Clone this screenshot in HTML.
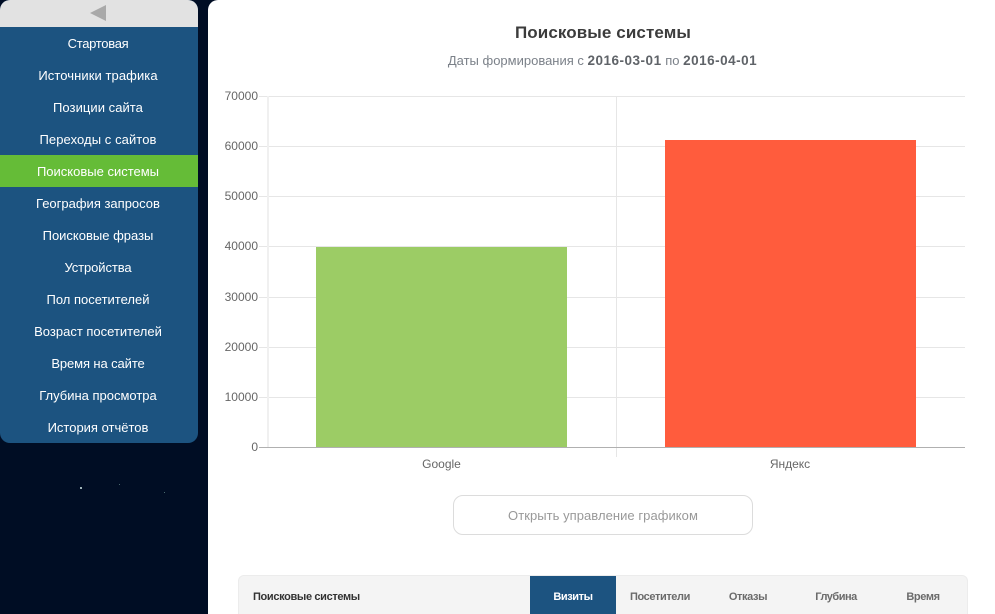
<!DOCTYPE html>
<html lang="ru"><head><meta charset="utf-8"><title>Поисковые системы</title>
<style>
*{box-sizing:border-box}
html,body{margin:0;padding:0;width:995px;height:614px;overflow:hidden;background:#000d24;font-family:"Liberation Sans",sans-serif}
.star{position:absolute;background:#9fb4b8}
#side{position:absolute;left:0;top:0;width:198px;height:443px;background:#1c5380;border-radius:10px;overflow:hidden}
#side .h{height:27px;background:#e2e2e2;position:relative}
#side .h svg{position:absolute;left:90px;top:5px}
#side a{display:block;height:32px;line-height:34px;text-align:center;color:#fff;font-size:13px;text-decoration:none;padding-right:2px;overflow:hidden}
#side a.on{background:#65bc37}
#main{position:absolute;left:208px;top:0;width:787px;height:614px;background:#fff;border-radius:10px 0 0 0;overflow:hidden}
.t{position:absolute;white-space:nowrap}
#title{left:0;width:790px;text-align:center;top:22px;font-size:17px;line-height:22px;font-weight:bold;color:#3c3c3c;letter-spacing:.1px}
#sub{left:0;width:789px;text-align:center;top:53px;font-size:13px;line-height:16px;color:#7b8189}
#sub b{color:#5f6368;font-size:13.5px;letter-spacing:.5px}
#btn{position:absolute;left:245px;top:495px;width:300px;height:40px;border:1px solid #dcdcdc;border-radius:10px;text-align:center;line-height:40px;font-size:13px;color:#999;letter-spacing:.05px}
#tbl{position:absolute;left:30px;top:575px;width:730px;height:60px;background:#f4f4f4;border:1px solid #ececec;border-radius:6px;font-size:11px;font-weight:bold;color:#6b6b6b}
#tbl span{position:absolute;top:0;height:60px;line-height:41px;text-align:center;letter-spacing:-.4px;padding-top:1px}
</style></head><body>
<div class="star" style="left:80px;top:487px;width:2px;height:2px"></div>
<div class="star" style="left:119px;top:484px;width:1px;height:1px;background:#4a6a70"></div>
<div class="star" style="left:164px;top:492px;width:1px;height:1px;background:#4a6a70"></div>
<nav id="side">
<div class="h"><svg width="16" height="16"><polygon points="16,0 16,16 0,8" fill="#a9a9a9"/></svg></div>
<a style="letter-spacing:-.3px">Стартовая</a><a style="letter-spacing:.08px">Источники трафика</a><a style="letter-spacing:.05px">Позиции сайта</a><a style="letter-spacing:.08px">Переходы с сайтов</a><a class="on">Поисковые системы</a><a>География запросов</a><a>Поисковые фразы</a><a style="letter-spacing:-.1px">Устройства</a><a>Пол посетителей</a><a>Возраст посетителей</a><a style="letter-spacing:-.1px">Время на сайте</a><a>Глубина просмотра</a><a>История отчётов</a>
</nav>
<main id="main">
<div class="t" id="title">Поисковые системы</div>
<div class="t" id="sub">Даты формирования с <b>2016-03-01</b> по <b>2016-04-01</b></div>
<div id="btn">Открыть управление графиком</div>
<div id="tbl">
<span style="left:14px;color:#333;letter-spacing:-.35px">Поисковые системы</span>
<span style="left:291px;width:86px;background:#1c5380;color:#fff">Визиты</span>
<span style="left:377px;width:88px">Посетители</span>
<span style="left:465px;width:88px">Отказы</span>
<span style="left:553px;width:88px;letter-spacing:-.5px">Глубина</span>
<span style="left:641px;width:86px">Время</span>
</div>
</main>
<svg style="position:absolute;left:0;top:0" width="995" height="614" font-family="Liberation Sans, sans-serif" font-size="12" fill="#666">
<g stroke="#e6e6e6" stroke-width="1" shape-rendering="crispEdges">
<line x1="259" x2="965" y1="96.5" y2="96.5"/><line x1="259" x2="965" y1="146.5" y2="146.5"/><line x1="259" x2="965" y1="196.5" y2="196.5"/><line x1="259" x2="965" y1="246.5" y2="246.5"/><line x1="259" x2="965" y1="297.5" y2="297.5"/><line x1="259" x2="965" y1="347.5" y2="347.5"/><line x1="259" x2="965" y1="397.5" y2="397.5"/>
<line x1="616.5" x2="616.5" y1="96" y2="457"/>
</g>
<rect x="267" y="96" width="2" height="351" fill="#f0f0f0"/>
<rect x="316" y="247" width="251" height="200" fill="#9ccc65"/>
<rect x="665" y="140" width="251" height="307" fill="#ff5c3d"/>
<line x1="259" x2="965" y1="447.5" y2="447.5" stroke="#b0b0b0" shape-rendering="crispEdges"/>
<g text-anchor="end">
<text x="258" y="100">70000</text><text x="258" y="150">60000</text><text x="258" y="200">50000</text><text x="258" y="250">40000</text><text x="258" y="301">30000</text><text x="258" y="351">20000</text><text x="258" y="401">10000</text><text x="258" y="451">0</text>
</g>
<text x="441.500" y="468" text-anchor="middle">Google</text>
<text x="790" y="468" text-anchor="middle">Яндекс</text>
</svg>
</body></html>
